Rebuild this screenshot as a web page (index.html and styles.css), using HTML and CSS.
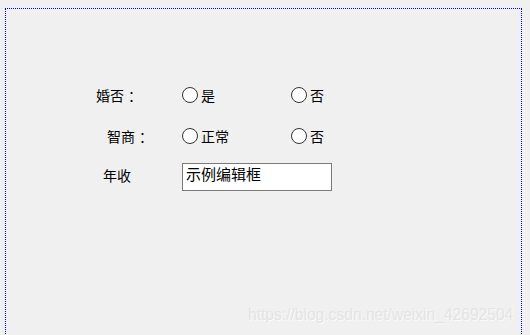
FILE: index.html
```html
<!DOCTYPE html>
<html lang="zh">
<head>
<meta charset="utf-8">
<link rel="stylesheet" href="styles.css">
</head>
<body>
<div class="frame">
  <div class="row row-marry">
    <div class="label label-marry">婚否<span class="colon">：</span></div>
    <div class="option"><span class="radio"></span><span>是</span></div>
    <div class="option"><span class="radio"></span><span>否</span></div>
  </div>
  <div class="row row-iq">
    <div class="label label-iq">智商<span class="colon">：</span></div>
    <div class="option"><span class="radio"></span><span>正常</span></div>
    <div class="option"><span class="radio"></span><span>否</span></div>
  </div>
  <div class="row row-income">
    <div class="label label-income">年收</div>
    <div class="textbox">示例编辑框</div>
  </div>
</div>
<div class="watermark">https://blog.csdn.net/weixin_42692504</div>
</body>
</html>
```
FILE: styles.css
```css
html, body {
  margin: 0;
  padding: 0;
  background: #f0f0f0;
  overflow: hidden;
  height: 335px;
}
body {
  font-family: "Noto Sans CJK SC", "Microsoft YaHei", sans-serif;
  font-size: 14px;
  color: #000;
}
.frame {
  margin: 8px 0 0 5px;
  width: 515px;
  height: 340px;
  border: 1px dotted #0000ff;
  box-sizing: content-box;
}
.row {
  display: flex;
  align-items: center;
  height: 20px;
}
.row-marry { margin-top: 76px; }
.row-iq { margin-top: 21px; }
.row-income { margin-top: 17px; height: 28px; align-items: flex-start; }
.label {
  width: 176px;
  box-sizing: border-box;
  line-height: 20px;
  white-space: nowrap;
}
.colon {
  padding-left: 4px;
}
.label-marry { padding-left: 90px; }
.label-iq { padding-left: 101px; }
.label-income { padding-left: 97px; margin-top: 2px; }
.option {
  width: 109px;
  display: flex;
  align-items: center;
  gap: 3px;
  line-height: 20px;
}
.radio {
  width: 14px;
  height: 14px;
  border: 1px solid #333;
  border-radius: 50%;
  background: #fff;
  flex: none;
}
.textbox {
  width: 150px;
  height: 28px;
  box-sizing: border-box;
  border: 1px solid #7a7a7a;
  background: #fff;
  font-size: 15px;
  line-height: 18px;
  padding: 1px 0 0 3px;
}
.watermark {
  position: absolute;
  left: 248px;
  top: 306px;
  font-family: "Liberation Sans", Arial, sans-serif;
  font-size: 15.6px;
  color: #e4e4e4;
  text-shadow: 1px 1px 0 #fafafa;
  white-space: nowrap;
}
```
